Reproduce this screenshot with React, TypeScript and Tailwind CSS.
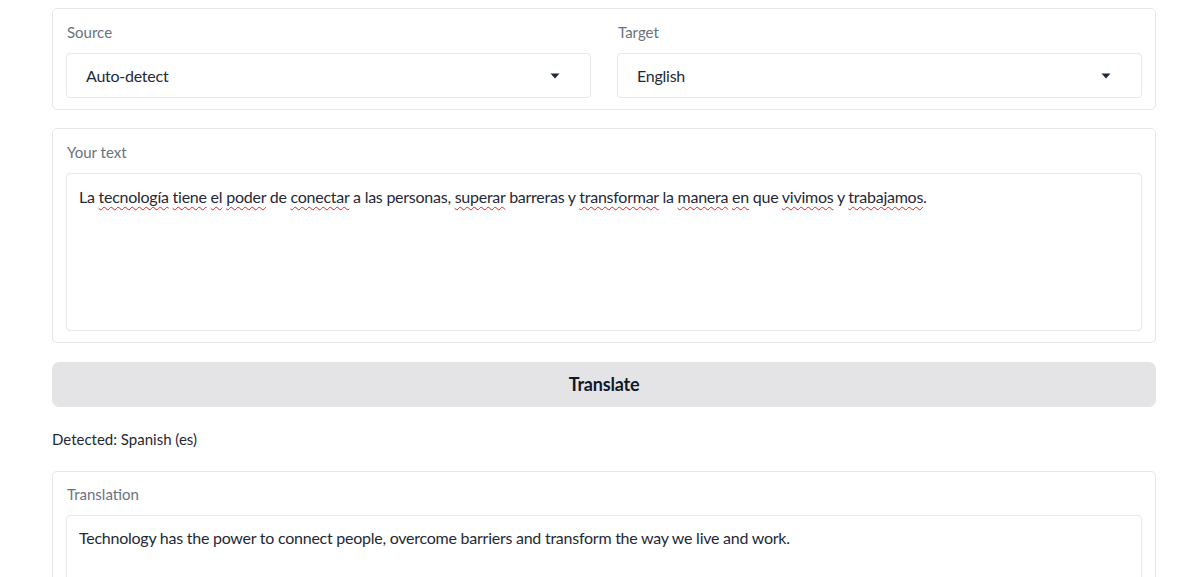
import React from 'react';

const font = { fontFamily: 'Lato, "Noto Sans", sans-serif' };

function Caret() {
  return (
    <svg width="10" height="6" viewBox="0 0 10 6" aria-hidden="true">
      <path d="M0.5 0.5 L9.5 0.5 L5 5.5 Z" fill="#1f2937" />
    </svg>
  );
}

function Select({ label, value }: { label: string; value: string }) {
  return (
    <div className="flex flex-col">
      <span className="text-[15px] leading-5 text-[#6b7280] mt-[13px] mb-[11px] pl-px">{label}</span>
      <div className="h-[45px] flex items-center justify-between pl-[19px] pr-[30px] bg-white border border-[#e5e7eb] rounded-[4px]">
        <span className="text-[16px] tracking-[-0.25px] text-[#1f2937]">{value}</span>
        <Caret />
      </div>
    </div>
  );
}

function Squiggle({ children }: { children: React.ReactNode }) {
  return <span className="underline decoration-wavy decoration-[#e02424] decoration-[1px] underline-offset-[3px]">{children}</span>;
}

export default function App() {
  return (
    <div style={font} className="h-[577px] overflow-hidden bg-white pl-[52px] pr-[30px] pt-[8px] flex flex-col">
      {/* Languages */}
      <div className="border border-[#e5e7eb] rounded-[5px] px-[13px] pb-[11px] grid grid-cols-2 gap-[26px]">
        <Select label="Source" value="Auto-detect" />
        <Select label="Target" value="English" />
      </div>

      {/* Input */}
      <div className="mt-[18px] border border-[#e5e7eb] rounded-[5px] px-[13px] pb-[11px] flex flex-col">
        <span className="text-[15px] leading-5 text-[#6b7280] mt-[13px] mb-[11px] pl-px">Your text</span>
        <div className="h-[158px] border border-[#e5e7eb] rounded-[4px] px-[12px] pt-[11px] text-[16px] tracking-[-0.25px] leading-6 text-[#1f2937]">
          La <Squiggle>tecnología</Squiggle> <Squiggle>tiene</Squiggle> <Squiggle>el</Squiggle> <Squiggle>poder</Squiggle> de <Squiggle>conectar</Squiggle> a las personas, <Squiggle>superar</Squiggle> barreras y <Squiggle>transformar</Squiggle> la <Squiggle>manera</Squiggle> <Squiggle>en</Squiggle> que <Squiggle>vivimos</Squiggle> y <Squiggle>trabajamos</Squiggle>.
        </div>
      </div>

      <button className="mt-[19px] h-[45px] shrink-0 rounded-[7px] bg-[#e4e4e7] text-[18px] tracking-[-0.2px] font-bold text-[#111827]">
        Translate
      </button>

      <div className="mt-[22px] text-[15px] leading-5 text-[#1f2937]">Detected: Spanish (es)</div>

      {/* Output */}
      <div className="mt-[22px] border border-[#e5e7eb] rounded-[5px] px-[13px] pb-[11px] flex flex-col shrink-0">
        <span className="text-[15px] leading-5 text-[#6b7280] mt-[12px] mb-[11px] pl-px">Translation</span>
        <div className="h-[158px] border border-[#e5e7eb] rounded-[4px] px-[12px] pt-[10px] text-[16px] tracking-[-0.25px] leading-6 text-[#1f2937]">
          Technology has the power to connect people, overcome barriers and transform the way we live and work.
        </div>
      </div>
    </div>
  );
}
